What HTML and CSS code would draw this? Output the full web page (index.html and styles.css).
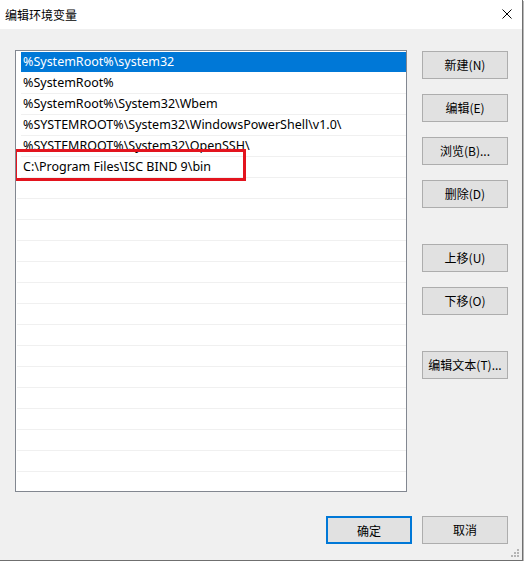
FILE: index.html
```html
<!DOCTYPE html>
<html lang="zh-CN">
<head>
<meta charset="utf-8">
<title>编辑环境变量</title>
<link rel="stylesheet" href="styles.css">
</head>
<body>
<div class="window">
  <div class="titlebar">
    <span class="title">编辑环境变量</span>
    <svg class="close" width="10" height="10" viewBox="0 0 10 10"><path d="M0.5 0.5 L9.5 9.5 M9.5 0.5 L0.5 9.5" stroke="#000" stroke-width="1" fill="none"/></svg>
  </div>
  <div class="content">
    <div class="main">
      <div class="list">
        <div class="row selected">%SystemRoot%\system32</div>
        <div class="row">%SystemRoot%</div>
        <div class="row">%SystemRoot%\System32\Wbem</div>
        <div class="row">%SYSTEMROOT%\System32\WindowsPowerShell\v1.0\</div>
        <div class="row">%SYSTEMROOT%\System32\OpenSSH\</div>
        <div class="row">C:\Program Files\ISC BIND 9\bin</div>
        <div class="row empty"></div>
        <div class="row empty"></div>
        <div class="row empty"></div>
        <div class="row empty"></div>
        <div class="row empty"></div>
        <div class="row empty"></div>
        <div class="row empty"></div>
        <div class="row empty"></div>
        <div class="row empty"></div>
        <div class="row empty"></div>
        <div class="row empty"></div>
        <div class="row empty"></div>
        <div class="row empty"></div>
        <div class="row empty"></div>
        <div class="row empty"></div>
        <div class="highlight"></div>
      </div>
      <div class="side">
        <div class="group">
          <button class="btn">新建(N)</button>
          <button class="btn">编辑(E)</button>
          <button class="btn">浏览(B)...</button>
          <button class="btn">删除(D)</button>
        </div>
        <div class="group">
          <button class="btn">上移(U)</button>
          <button class="btn">下移(O)</button>
        </div>
        <div class="group">
          <button class="btn">编辑文本(T)...</button>
        </div>
      </div>
    </div>
    <div class="footer">
      <button class="btn primary">确定</button>
      <button class="btn">取消</button>
    </div>
    <div class="grip">
      <span></span><span></span><span></span><span></span><span></span><span></span>
    </div>
  </div>
</div>
</body>
</html>
```
FILE: styles.css
```css
html, body {
  margin: 0;
  padding: 0;
  background: #ffffff;
}
body {
  font-family: "Noto Sans", "Noto Sans CJK SC", sans-serif;
  font-size: 12px;
  color: #000;
}
.window {
  width: 522px;
  height: 560px;
  border-right: 1px solid #6f6f6f;
  border-bottom: 1px solid #6f6f6f;
  display: flex;
  flex-direction: column;
  box-shadow: 1px 1px 0 #b8b8b8;
}
.titlebar {
  height: 29px;
  flex: none;
  background: #fff;
  display: flex;
  align-items: center;
  justify-content: space-between;
  padding: 0 10px 0 5px;
}
.title {
  font-family: "Noto Sans CJK SC", sans-serif;
  font-size: 12px;
  line-height: 29px;
}
.close {
  display: block;
  margin-top: -1px;
}
.content {
  flex: 1;
  background: #f0f0f0;
  position: relative;
  padding: 21px 14px 0 15px;
}
.main {
  display: flex;
  gap: 15px;
}
.list {
  position: relative;
  width: 390px;
  height: 439px;
  border: 1px solid #828790;
  background: #fff;
  overflow: hidden;
  padding-top: 1px;
  box-sizing: content-box;
}
.row {
  height: 20px;
  border-bottom: 1px solid #f0f0f0;
  margin-left: 5px;
  padding-left: 2px;
  font-family: "Noto Sans", sans-serif;
  font-size: 12.5px;
  line-height: 20px;
  white-space: nowrap;
}
.row.empty {
  margin-left: 1px;
}
.row.selected {
  background: #0078d7;
  color: #fff;
  border-bottom-color: #fff;
}
.highlight {
  position: absolute;
  left: -2px;
  top: 98px;
  width: 226px;
  height: 26px;
  border: 3px solid #e3141e;
}
.side {
  display: flex;
  flex-direction: column;
  padding-top: 1px;
  gap: 36px;
}
.group {
  display: flex;
  flex-direction: column;
  gap: 15px;
}
.btn {
  width: 86px;
  height: 28px;
  box-sizing: border-box;
  border: 1px solid #adadad;
  background: #e1e1e1;
  font-family: "Noto Sans CJK SC", sans-serif;
  font-size: 12px;
  color: #000;
  padding: 0 0 1px 0;
  margin: 0;
  line-height: 25px;
}
.footer {
  display: flex;
  justify-content: flex-end;
  gap: 10px;
  margin-top: 24px;
}
.btn.primary {
  border: 2px solid #0078d7;
}
.grip {
  position: absolute;
  right: 3px;
  bottom: 3px;
  width: 8px;
  height: 8px;
}
.grip span {
  position: absolute;
  width: 2px;
  height: 2px;
  background: #b4b4b4;
}
.grip span:nth-child(1) { right: 0; top: 0; }
.grip span:nth-child(2) { right: 0; top: 3px; }
.grip span:nth-child(3) { right: 3px; top: 3px; }
.grip span:nth-child(4) { right: 0; top: 6px; }
.grip span:nth-child(5) { right: 3px; top: 6px; }
.grip span:nth-child(6) { right: 6px; top: 6px; }
```
